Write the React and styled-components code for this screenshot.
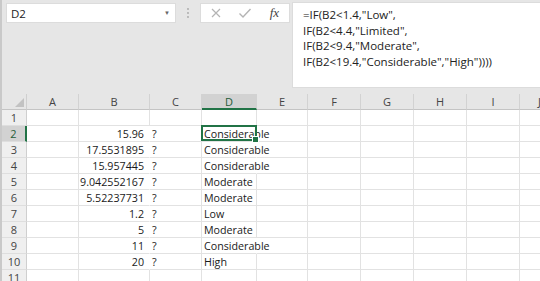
import styled, { createGlobalStyle } from "styled-components";

const Global = createGlobalStyle`
  html, body {
    margin: 0;
    padding: 0;
    background: #ffffff;
    overflow: hidden;
  }
`;

const Window = styled.div`
  width: 540px;
  height: 281px;
  overflow: hidden;
  border-left: 2px solid #c9c9c9;
  box-sizing: border-box;
  font-family: "Open Sans", "Liberation Sans", sans-serif;
`;

const TopBar = styled.div`
  height: 94px;
  background: #e6e6e6;
  display: flex;
  align-items: flex-start;
  padding: 3px 0 0 5px;
  box-sizing: border-box;
`;

const NameBox = styled.div`
  width: 168px;
  height: 18px;
  margin-top: 1px;
  background: #fff;
  box-shadow: 0 0 0 1px #dcdcdc;
  display: flex;
  align-items: center;
  justify-content: space-between;
  padding: 0 5px 0 4px;
  box-sizing: border-box;
  font-size: 11.5px;
  color: #222;
`;

const Caret = styled.span`
  font-size: 6px;
  color: #666;
`;

const Grip = styled.div`
  width: 26px;
  height: 20px;
  display: flex;
  align-items: center;
  justify-content: center;
`;

const ButtonBox = styled.div`
  width: 88px;
  height: 18px;
  margin-top: 1px;
  background: #fff;
  box-shadow: 0 0 0 1px #dcdcdc;
  display: flex;
  align-items: center;
`;

const Slot = styled.div`
  width: 30px;
  display: flex;
  justify-content: center;
  align-items: center;
`;

const Fx = styled.span`
  font-family: "Liberation Serif", serif;
  font-style: italic;
  font-size: 13px;
  color: #444;
`;

const FormulaBox = styled.div`
  flex: 1;
  margin-left: 4px;
  height: 84px;
  background: #fff;
  box-shadow: 0 0 0 1px #dcdcdc;
  padding: 4px 0 0 10px;
  box-sizing: border-box;
  font-size: 11.5px;
  line-height: 15.5px;
  color: #222;
  white-space: pre;
`;

const Sheet = styled.div`
  display: grid;
  grid-template-columns: 25px 52px 71px 52px 55px 51px 53px 53px 53px 53px 40px;
  grid-auto-rows: 16px;
`;

const Corner = styled.div`
  background: #e6e6e6;
  border-right: 1px solid #cfcfcf;
  border-bottom: 1px solid #c4c4c4;
  position: relative;
  &::after {
    content: "";
    position: absolute;
    right: 2px;
    bottom: 2px;
    border-left: 9px solid transparent;
    border-bottom: 9px solid #c2c2c2;
  }
`;

const ColHead = styled.div`
  background: ${(p) => (p.$active ? "#d2d2d2" : "#e6e6e6")};
  border-right: 1px solid #d2d2d2;
  border-bottom: ${(p) => (p.$active ? "2px solid #217346" : "1px solid #c4c4c4")};
  display: flex;
  align-items: center;
  justify-content: center;
  font-size: 11px;
  color: ${(p) => (p.$active ? "#1f5c38" : "#444")};
  box-sizing: border-box;
`;

const RowHead = styled.div`
  background: ${(p) => (p.$active ? "#d2d2d2" : "#efefef")};
  border-right: ${(p) => (p.$active ? "2px solid #217346" : "1px solid #cfcfcf")};
  border-bottom: 1px solid #dedede;
  display: flex;
  align-items: center;
  justify-content: center;
  font-size: 11px;
  color: ${(p) => (p.$active ? "#1f5c38" : "#444")};
  box-sizing: border-box;
`;

const Cell = styled.div`
  position: relative;
  border-right: 1px solid ${(p) => (p.$spill ? "transparent" : "#e2e2e2")};
  border-bottom: 1px solid #e2e2e2;
  display: flex;
  align-items: center;
  justify-content: ${(p) => (p.$right ? "flex-end" : "flex-start")};
  padding: 0 ${(p) => (p.$right ? "5px" : "2px")} 0 2px;
  font-size: 10.7px;
  color: #1a1a1a;
  white-space: nowrap;
  box-sizing: border-box;
  min-width: 0;
  z-index: ${(p) => (p.$spill ? 1 : 0)};
`;

const Selection = styled.div`
  position: absolute;
  inset: -1px -1px 0 -1px;
  border: 2px solid #217346;
  pointer-events: none;
  &::after {
    content: "";
    position: absolute;
    right: -4px;
    bottom: -4px;
    width: 5px;
    height: 5px;
    background: #217346;
    border: 1px solid #fff;
  }
`;

const cols = ["A", "B", "C", "D", "E", "F", "G", "H", "I", "J"];

const data = [
  ["15.96", "Considerable"],
  ["17.5531895", "Considerable"],
  ["15.957445", "Considerable"],
  ["9.042552167", "Moderate"],
  ["5.52237731", "Moderate"],
  ["1.2", "Low"],
  ["5", "Moderate"],
  ["11", "Considerable"],
  ["20", "High"],
];

const formula = `=IF(B2<1.4,"Low",
IF(B2<4.4,"Limited",
IF(B2<9.4,"Moderate",
IF(B2<19.4,"Considerable","High"))))`;

const X = () => (
  <svg width="12" height="12" viewBox="0 0 12 12">
    <path d="M2 2 L10 10 M10 2 L2 10" stroke="#b4b4b4" strokeWidth="1.2" fill="none" />
  </svg>
);

const Check = () => (
  <svg width="14" height="12" viewBox="0 0 14 12">
    <path d="M1.5 6.5 L5 10 L12.5 2" stroke="#b4b4b4" strokeWidth="1.4" fill="none" />
  </svg>
);

const Dots = () => (
  <svg width="4" height="12" viewBox="0 0 4 12">
    <circle cx="2" cy="2" r="0.9" fill="#a8a8a8" />
    <circle cx="2" cy="6" r="0.9" fill="#a8a8a8" />
    <circle cx="2" cy="10" r="0.9" fill="#a8a8a8" />
  </svg>
);

export default function App() {
  const rows = [];
  for (let r = 1; r <= 11; r++) {
    const d = data[r - 2];
    rows.push(<RowHead key={`h${r}`} $active={r === 2}>{r}</RowHead>);
    cols.forEach((c) => {
      let content = null;
      let props = {};
      if (d && c === "B") {
        content = d[0];
        props = { $right: true, $spill: true };
      } else if (d && c === "C") {
        content = "?";
      } else if (d && c === "D") {
        content = d[1];
        props = { $spill: d[1] === "Considerable" };
      }
      rows.push(
        <Cell key={`${c}${r}`} {...props}>
          {content}
          {r === 2 && c === "D" && <Selection />}
        </Cell>
      );
    });
  }

  return (
    <Window>
      <Global />
      <TopBar>
        <NameBox>
          D2
          <Caret>▼</Caret>
        </NameBox>
        <Grip>
          <Dots />
        </Grip>
        <ButtonBox>
          <Slot>
            <X />
          </Slot>
          <Slot>
            <Check />
          </Slot>
          <Slot>
            <Fx>fx</Fx>
          </Slot>
        </ButtonBox>
        <FormulaBox>{formula}</FormulaBox>
      </TopBar>
      <Sheet>
        <Corner />
        {cols.map((c) => (
          <ColHead key={c} $active={c === "D"}>
            {c}
          </ColHead>
        ))}
        {rows}
      </Sheet>
    </Window>
  );
}
